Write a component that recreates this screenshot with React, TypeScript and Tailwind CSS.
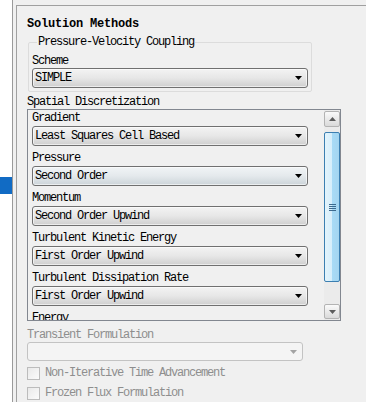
import React from "react";

const F = "font-['Liberation_Mono',monospace] text-[12px] tracking-[-1.2px]";

function Tri({ w = 7, h = 4, color = "#000", up = false }: { w?: number; h?: number; color?: string; up?: boolean }) {
  return (
    <svg width={w} height={h} viewBox={`0 0 ${w} ${h}`} className="block shrink-0">
      <path d={up ? `M0 ${h}H${w}L${w / 2} 0Z` : `M0 0H${w}L${w / 2} ${h}Z`} fill={color} />
    </svg>
  );
}

function Select({ value, tint }: { value: string; tint?: boolean }) {
  return (
    <div
      className={
        "h-[20px] w-[276px] shrink-0 rounded-[3px] border border-[#707070] flex items-center justify-between pl-[2px] pr-[5px] shadow-[inset_0_0_0_1px_rgba(255,255,255,0.6)] " +
        (tint
          ? "bg-linear-to-b from-[#f1f4f6] via-[#e4e9ec] to-[#ccd4d9]"
          : "bg-linear-to-b from-[#f3f3f3] via-[#e7e7e7] to-[#cfcfcf]")
      }
    >
      <span className="leading-[14px] whitespace-pre">{value}</span>
      <Tri />
    </div>
  );
}

function Item({ label, value, tint }: { label: string; value?: string; tint?: boolean }) {
  return (
    <div className="flex flex-col shrink-0">
      <div className="h-[15px] leading-[15px] whitespace-pre">{label}</div>
      {value ? <Select value={value} tint={tint} /> : null}
    </div>
  );
}

function ScrollBtn({ up }: { up?: boolean }) {
  return (
    <div
      className={
        "shrink-0 rounded-[2px] border border-[#b3b3b3] bg-linear-to-b from-[#fafafa] to-[#dadada] flex items-center justify-center " +
        (up ? "h-[16px]" : "h-[15px]")
      }
    >
      <Tri up={up} w={7} h={4} color="#5c5c5c" />
    </div>
  );
}

function Check({ label }: { label: string }) {
  return (
    <div className="h-[20px] flex items-center gap-[5px] shrink-0">
      <div className="w-[13px] h-[13px] border border-[#bcbcbc] bg-linear-to-br from-[#e9e9e9] to-[#fbfbfb] shrink-0" />
      <span className="text-[#8e8e8e] whitespace-pre leading-[14px]">{label}</span>
    </div>
  );
}

export default function App() {
  return (
    <div className={`w-[366px] h-[402px] overflow-hidden bg-[#f0f0f0] flex text-black ${F}`}>
      <div className="w-[13px] h-full shrink-0 bg-white border-r border-[#9a9a9a] flex flex-col">
        <div className="mt-[177px] h-[17px] bg-[#116bc4]" />
      </div>
      <div className="w-[3px] shrink-0" />
      <div className="flex-1 mt-[5px] border-l border-t border-[#a0a0a0] pl-[10px] pt-[11px] flex flex-col">
        <div className="h-[15px] leading-[15px] font-bold tracking-[-0.2px] whitespace-pre shrink-0">Solution Methods</div>
        <fieldset className="mt-[4px] ml-[1px] w-[284px] border border-[#dcdcdc] rounded-[2px] px-[3px] pt-[6px] pb-[3px] shrink-0">
          <legend className="ml-[5px] px-[1px] leading-[12px] whitespace-pre">Pressure-Velocity Coupling</legend>
          <div className="h-[14px] leading-[14px]">Scheme</div>
          <Select value="SIMPLE" />
        </fieldset>
        <div className="mt-[3px] h-[14px] leading-[14px] whitespace-pre shrink-0">Spatial Discretization</div>
        <div className="w-[314px] h-[212px] shrink-0 border border-[#828790] flex">
          <div className="flex-1 overflow-hidden pl-[4px] pt-[1px] flex flex-col gap-[5px]">
            <Item label="Gradient" value="Least Squares Cell Based" />
            <Item label="Pressure" value="Second Order" tint />
            <Item label="Momentum" value="Second Order Upwind" />
            <Item label="Turbulent Kinetic Energy" value="First Order Upwind" />
            <Item label="Turbulent Dissipation Rate" value="First Order Upwind" />
            <Item label="Energy" />
          </div>
          <div className="w-[16px] shrink-0 flex flex-col py-[1px] bg-[#ebebeb]">
            <ScrollBtn up />
            <div className="flex-1">
              <div className="mt-[5px] h-[150px] rounded-[2px] border border-[#3c7fb1] bg-[linear-gradient(to_right,#e3f4fc,#d6eefb_50%,#a9dbf6_50%,#a4d5f0)] flex flex-col items-center justify-center gap-[1px]">
                <div className="w-[7px] h-[1px] bg-[#3d6a8e]" />
                <div className="w-[7px] h-[1px] bg-[#3d6a8e]" />
                <div className="w-[7px] h-[1px] bg-[#3d6a8e]" />
                <div className="w-[7px] h-[1px] bg-[#3d6a8e]" />
              </div>
            </div>
            <ScrollBtn />
          </div>
        </div>
        <div className="mt-[7px] h-[14px] leading-[14px] text-[#8e8e8e] whitespace-pre shrink-0">Transient Formulation</div>
        <div className="w-[276px] h-[19px] shrink-0 rounded-[3px] border border-[#c3c3c3] bg-[#f4f4f4] flex items-center justify-end pr-[5px]">
          <Tri color="#a3a3a3" />
        </div>
        <div className="mt-[2px] flex flex-col shrink-0">
          <Check label="Non-Iterative Time Advancement" />
          <Check label="Frozen Flux Formulation" />
        </div>
      </div>
    </div>
  );
}
